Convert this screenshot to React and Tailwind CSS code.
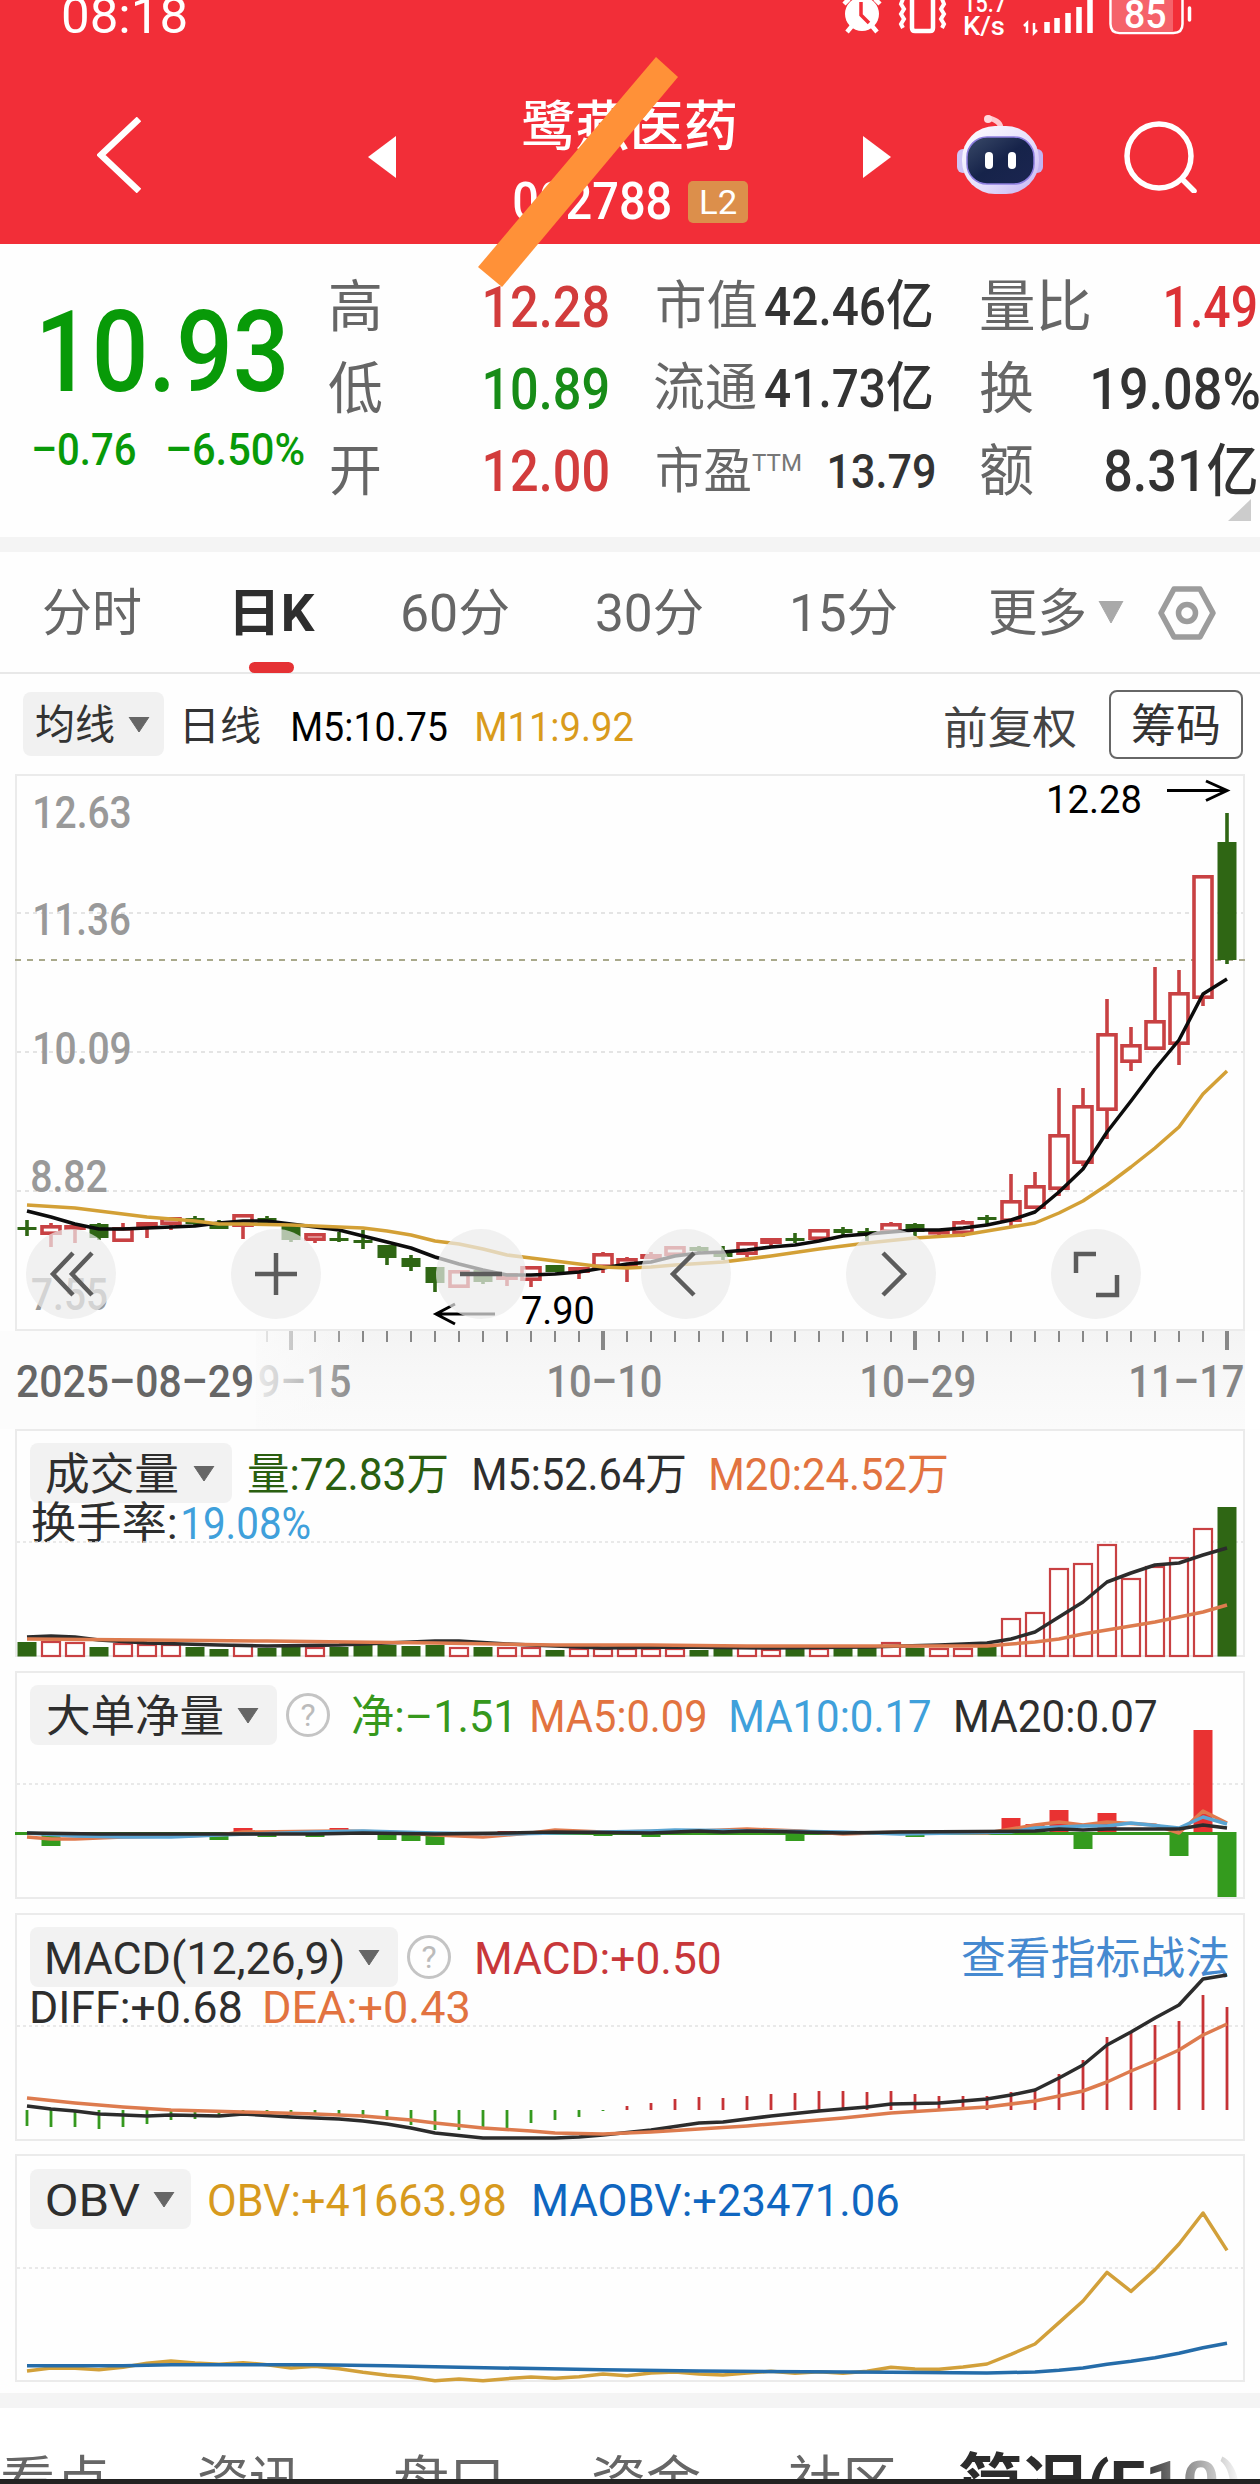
import { useLayoutEffect, useRef } from 'react';

const measure = document.createElement('canvas').getContext('2d');

function inkOf(el) {
  const cs = getComputedStyle(el);
  measure.font = `${cs.fontWeight} ${cs.fontSize} ${cs.fontFamily}`;
  const m = measure.measureText(el.textContent);
  return { l: m.actualBoundingBoxLeft, w: m.actualBoundingBoxLeft + m.actualBoundingBoxRight };
}

// Condenses its text so that the glyphs fill the width of the box.
function Fit({ className = '', children }) {
  const box = useRef(null);
  const inner = useRef(null);
  useLayoutEffect(() => {
    const ink = inkOf(inner.current);
    const s = box.current.offsetWidth / ink.w;
    inner.current.style.transform = `translateX(${ink.l * s}px) scaleX(${s})`;
  });
  return (
    <span ref={box} className={`block shrink-0 leading-none whitespace-nowrap ${className}`}>
      <span ref={inner} className="inline-block origin-left align-top">{children}</span>
    </span>
  );
}

// Chart label with a fixed ink width, placed at its baseline.
function Label({ x, y, w, className, children }) {
  const ref = useRef(null);
  useLayoutEffect(() => {
    const ink = inkOf(ref.current);
    const s = w / ink.w;
    ref.current.setAttribute('transform', `translate(${x + ink.l * s} ${y}) scale(${s} 1)`);
  });
  return <text ref={ref} className={className}>{children}</text>;
}

const X = (i) => 27 + i * 24;
const RED = '#c84143';
const GREEN = '#2f6614';

// [up, bodyTop, bodyBottom, high, low, volumeTop]
const DAYS = [
  [0, 1227, 1229, 1220, 1236, 1642], [1, 1225, 1235, 1223, 1247, 1641], [1, 1225, 1230, 1223, 1243, 1642],
  [0, 1224, 1238, 1223, 1240, 1647], [1, 1227, 1242, 1223, 1242, 1643], [1, 1222, 1228, 1222, 1238, 1644],
  [1, 1217, 1225, 1217, 1230, 1644], [0, 1218, 1224, 1216, 1227, 1647], [0, 1225, 1229, 1220, 1229, 1649],
  [1, 1214, 1227, 1214, 1239, 1644], [0, 1218, 1224, 1216, 1224, 1648], [0, 1225, 1240, 1225, 1242, 1647],
  [1, 1233, 1241, 1233, 1243, 1647], [0, 1238, 1240, 1232, 1242, 1647], [0, 1240, 1242, 1230, 1249, 1645],
  [0, 1245, 1258, 1245, 1265, 1645], [0, 1258, 1267, 1255, 1271, 1646], [0, 1267, 1283, 1267, 1292, 1645],
  [1, 1270, 1288, 1270, 1288, 1647], [0, 1270, 1282, 1270, 1284, 1647], [1, 1273, 1280, 1273, 1286, 1647],
  [1, 1266, 1281, 1266, 1287, 1647], [0, 1265, 1272, 1265, 1272, 1650], [1, 1267, 1273, 1267, 1279, 1648],
  [1, 1253, 1268, 1252, 1273, 1648], [1, 1258, 1268, 1257, 1282, 1648], [1, 1254, 1259, 1252, 1259, 1648],
  [1, 1246, 1256, 1246, 1256, 1648], [0, 1247, 1251, 1246, 1252, 1650], [0, 1251, 1257, 1246, 1260, 1648],
  [1, 1242, 1255, 1242, 1257, 1647], [1, 1238, 1244, 1238, 1246, 1649], [0, 1238, 1241, 1233, 1243, 1648],
  [1, 1229, 1240, 1229, 1240, 1648], [0, 1229, 1233, 1227, 1236, 1648], [0, 1231, 1234, 1228, 1241, 1648],
  [1, 1223, 1233, 1222, 1233, 1642], [0, 1224, 1232, 1223, 1236, 1648], [1, 1230, 1234, 1230, 1236, 1648],
  [1, 1221, 1234, 1220, 1237, 1648], [0, 1217, 1220, 1215, 1224, 1647], [1, 1200, 1222, 1174, 1226, 1618],
  [1, 1185, 1209, 1172, 1209, 1612], [1, 1134, 1190, 1088, 1196, 1568], [1, 1105, 1164, 1088, 1166, 1563],
  [1, 1033, 1111, 999, 1139, 1544], [1, 1044, 1063, 1027, 1071, 1578], [1, 1020, 1050, 967, 1050, 1566],
  [1, 992, 1045, 970, 1065, 1557], [1, 875, 999, 875, 1006, 1528], [0, 842, 960, 813, 964, 1507],
];

const MA5 = [1211, 1217, 1224, 1229, 1229, 1228, 1227, 1226, 1223, 1221, 1221, 1224, 1227, 1230, 1236, 1242, 1248, 1257, 1264, 1270, 1275, 1275, 1274, 1272, 1268, 1264, 1262, 1256, 1253, 1252, 1250, 1247, 1245, 1241, 1236, 1234, 1232, 1230, 1230, 1228, 1225, 1220, 1212, 1192, 1169, 1132, 1101, 1069, 1040, 994, 979]
  .map((y, i) => `${X(i)},${y}`).join(' ');
const MA11 = '27,1205 75,1208 99,1211 123,1214 147,1217 171,1219 195,1221 219,1224 243,1224 291,1225 315,1226 363,1228 387,1231 411,1235 435,1241 459,1244 483,1249 507,1255 531,1258 579,1264 603,1267 627,1268 651,1267 675,1265 723,1262 771,1256 819,1249 867,1243 915,1238 963,1235 1011,1227 1035,1223 1059,1213 1083,1201 1107,1185 1131,1167 1155,1148 1179,1127 1203,1094 1227,1071';
const V5 = '27,1637 51,1636 75,1637 99,1640 147,1643 219,1645 267,1646 339,1645 387,1643 435,1641 459,1641 507,1644 555,1646 603,1648 675,1647 771,1648 867,1647 939,1645 987,1643 1011,1639 1035,1632 1059,1617 1083,1602 1107,1582 1131,1573 1155,1565 1179,1563 1203,1555 1227,1548';
const V20 = '27,1639 147,1640 267,1641 435,1643 555,1645 651,1645 747,1646 843,1646 987,1646 1011,1644 1035,1642 1059,1639 1083,1634 1107,1630 1131,1626 1155,1622 1179,1617 1203,1612 1227,1605';

const NET = [[1, 1846], [8, 1840], [9, 1828], [10, 1837], [12, 1837], [13, 1828], [15, 1840], [16, 1841], [17, 1845], [20, 1831], [24, 1836], [26, 1837], [32, 1841], [37, 1837], [41, 1818], [42, 1824], [43, 1810], [44, 1849], [45, 1813], [48, 1856], [49, 1730], [50, 1897]];
const N20 = '27,1833 100,1834 243,1834 315,1834 363,1833 435,1834 507,1833 555,1832 651,1833 699,1831 723,1832 747,1831 843,1833 900,1832 1035,1831 1059,1829 1083,1830 1107,1829 1179,1829 1203,1825 1227,1828';
const N5 = '27,1837 51,1839 75,1839 123,1837 219,1835 243,1832 339,1831 387,1832 435,1835 483,1837 531,1833 555,1830 603,1832 699,1831 747,1829 800,1831 843,1834 900,1832 987,1833 1035,1825 1059,1822 1083,1825 1107,1822 1155,1825 1179,1833 1203,1811 1227,1823';
const N10 = '27,1833 75,1836 123,1837 171,1837 219,1835 315,1832 363,1831 435,1833 507,1834 651,1831 675,1830 771,1831 843,1832 900,1834 1011,1832 1035,1828 1083,1826 1107,1826 1131,1823 1179,1828 1203,1817 1227,1824';

const MACD = [2126, 2127, 2127, 2129, 2127, 2124, 2120, 2119, 2115, 2113, 2113, 2112, 2113, 2115, 2118, 2120, 2125, 2130, 2130, 2127, 2128, 2123, 2120, 2117, 2111, 2106, 2103, 2099, 2097, 2098, 2096, 2094, 2093, 2091, 2091, 2092, 2091, 2094, 2096, 2096, 2096, 2092, 2090, 2074, 2060, 2037, 2032, 2025, 2021, 1995, 2007];
const DIFF = '27,2106 51,2109 75,2111 99,2114 147,2116 171,2115 219,2116 243,2114 291,2117 339,2119 363,2121 387,2124 411,2128 435,2133 483,2138 555,2138 579,2137 603,2135 651,2130 699,2123 723,2122 771,2116 819,2111 867,2107 891,2104 939,2103 987,2099 1011,2095 1035,2090 1059,2078 1083,2065 1107,2045 1131,2032 1155,2018 1179,2005 1203,1979 1227,1975';
const DEA = '27,2098 75,2103 123,2107 171,2110 243,2112 315,2114 363,2116 411,2120 435,2123 483,2128 531,2131 555,2133 603,2134 651,2132 699,2129 747,2126 795,2122 843,2118 891,2113 939,2110 987,2107 1035,2101 1083,2091 1107,2082 1131,2071 1155,2061 1179,2050 1203,2035 1227,2024';
const OBV = [693, 684, 685, 689, 682, 670, 663, 669, 673, 668, 674, 684, 679, 686, 697, 706, 712, 722, 717, 722, 716, 711, 715, 710, 702, 707, 699, 696, 702, 705, 699, 694, 700, 695, 700, 694, 682, 687, 688, 681, 672, 643, 612, 548, 483, 397, 454, 389, 312, 219, 331]
  .map((v, i) => `${X(i)},${2140 + v / 3}`).join(' ');
const MAOBV = '27,2365.7 123,2365.7 171,2364.7 315,2364.7 387,2365.7 459,2367.3 603,2369.7 699,2371 891,2372.3 987,2373 1035,2372 1059,2370.3 1083,2368 1107,2364.3 1131,2361.3 1155,2357.7 1179,2353.3 1203,2347.7 1227,2343.3';

function Line({ points, color, width = 3.5 }) {
  return <polyline points={points} fill="none" stroke={color} strokeWidth={width} strokeLinejoin="round" />;
}

function Dots({ y }) {
  return <line x1="17" x2="1243" y1={y} y2={y} stroke="#e2e2e2" strokeWidth="1.5" strokeDasharray="3 3" />;
}

function StatusIcons() {
  return (
    <svg viewBox="840 0 360 37" className="ml-[654px] h-[37px] w-[360px] shrink-0 self-start" fill="none" stroke="#fff">
      <circle cx="862" cy="14" r="17" fill="#fff" stroke="none" />
      <path d="M861 2v13l8 8" stroke="#f22e38" strokeWidth="3.5" />
      <path d="M852 26l-5 6M872 26l5 6M844 4l5-5M880 4l-5-5" strokeWidth="4.500" />
      <path d="M912 0v28q0 3 3 3h15q3 0 3-3V0" strokeWidth="4.500" />
      <path d="M903 -1l-2 5 3 5-3 5 3 5-3 5 2 4M942 -1l2 5-3 5 3 5-3 5 3 5-2 4" strokeWidth="4" />
      <path d="M1027 33v-10l-3 3M1034 23v10l3-3" strokeWidth="2.5" />
      <path d="M1047 33V22M1057 33V18M1068 33V13M1079 33V7M1090 33V0" strokeWidth="5.500" />
      <rect x="1112" y="-6" width="61" height="37" fill="#fff" fillOpacity=".25" stroke="none" />
      <path d="M1110.500 -2V24q0 9 9 9h54q9 0 9-9V-2" strokeWidth="2.500" />
      <path d="M1189.500 8v12" strokeWidth="3.500" strokeLinecap="round" />
    </svg>
  );
}

function Robot() {
  return (
    <svg viewBox="957 114 86 82" className="ml-[66px] mb-[4px] h-[82px] w-[86px] shrink-0">
      <defs>
        <linearGradient id="shell" x1="0" y1="0" x2="1" y2="1">
          <stop offset="0" stopColor="#fff" />
          <stop offset=".6" stopColor="#e4dcfb" />
          <stop offset="1" stopColor="#c3b0f2" />
        </linearGradient>
        <linearGradient id="visor" x1="0" y1="0" x2="1" y2="1">
          <stop offset="0" stopColor="#3a4a68" />
          <stop offset=".5" stopColor="#16234a" />
          <stop offset="1" stopColor="#1b2550" />
        </linearGradient>
      </defs>
      <path d="M1001 129q0-8-12-11" stroke="#ffc9cf" strokeWidth="5" fill="none" strokeLinecap="round" />
      <circle cx="988" cy="119" r="4" fill="#ffd9dd" />
      <rect x="957" y="149" width="12" height="24" rx="6" fill="#cfc4f4" />
      <rect x="1031" y="149" width="12" height="24" rx="6" fill="#c3b4f0" />
      <rect x="962" y="126" width="77" height="68" rx="33" fill="url(#shell)" />
      <rect x="967" y="137" width="67" height="47" rx="20" fill="url(#visor)" stroke="#8f7fe0" strokeWidth="1.500" />
      <rect x="985" y="152" width="8" height="17" rx="4" fill="#fff" />
      <rect x="1008" y="152" width="8" height="17" rx="4" fill="#fff" />
    </svg>
  );
}

function Header() {
  return (
    <header className="relative z-10 h-[244px] bg-[#f22e38] text-white">
      <div className="flex h-[32px] items-center pl-[63px]">
        <Fit className="w-[123px] text-[50px]">08:18</Fit>
        <StatusIcons />
        <div className="-ml-[236px] flex w-[42px] flex-col self-start">
          <Fit className="-mt-[9px] ml-px w-[41px] text-[25px] font-medium">15.7</Fit>
          <Fit className="-mt-[2px] w-[40px] text-[25px] font-medium">K/s</Fit>
        </div>
        <Fit className="ml-[119px] -mt-[3px] w-[41px] text-[38px] font-medium">85</Fit>
      </div>
      <div className="mt-[38px] flex h-[174px] items-center pl-[97px]">
        <svg viewBox="0 0 44 76" className="mb-[4px] h-[76px] w-[44px] shrink-0" fill="none" stroke="#fff" strokeWidth="6.500">
          <path d="M42 2L4 38L42 74" />
        </svg>
        <svg viewBox="0 0 28 42" className="ml-[227px] h-[42px] w-[28px] shrink-0"><path d="M28 0V42L0 21Z" fill="#fff" /></svg>
        <div className="ml-[118px] flex h-full w-[234px] flex-col pt-[31px]">
          <Fit className="ml-[9px] w-[212px] text-[54px] font-medium">鹭燕医药</Fit>
          <div className="mt-[26px] flex h-[42px] items-center">
            <Fit className="w-[156px] text-[52px] font-medium">002788</Fit>
            <div className="ml-[18px] flex h-[42px] w-[60px] shrink-0 items-center rounded-[5px] bg-[#dc8f4b] pl-[13px]">
              <Fit className="w-[35px] text-[34px]">L2</Fit>
            </div>
          </div>
        </div>
        <svg viewBox="0 0 28 42" className="ml-[115px] h-[42px] w-[28px] shrink-0"><path d="M0 0V42L28 21Z" fill="#fff" /></svg>
        <Robot />
        <svg viewBox="0 0 73 72" className="ml-[81px] h-[72px] w-[73px] shrink-0" fill="none" stroke="#fff" strokeWidth="5.500">
          <circle cx="35" cy="35" r="32" />
          <path d="M58 58L70 70" strokeLinecap="round" />
        </svg>
      </div>
      <svg viewBox="478 57 200 230" className="absolute top-[57px] left-[478px] h-[230px] w-[200px]">
        <path d="M656 57L678 77L502 287L478 267Z" fill="#ff9138" />
      </svg>
    </header>
  );
}

function Quote() {
  return (
    <section className="flex h-[293px] bg-[#fefefe] text-[#333]">
      <div className="w-[331px] shrink-0 pt-[52px] text-[#089a08]">
        <Fit className="ml-[43px] w-[241px] text-[113px] font-medium">10.93</Fit>
        <div className="mt-[18px] flex pl-[34px] font-medium">
          <Fit className="w-[101px] text-[45px]">–0.76</Fit>
          <Fit className="ml-[33px] w-[136px] text-[45px]">–6.50%</Fit>
        </div>
      </div>
      <div className="relative pt-[22px] font-medium">
        <div className="flex h-[82px] items-center">
          <Fit className="w-[49px] text-[56px] font-normal text-[#666]">高</Fit>
          <Fit className="ml-[105px] w-[123px] text-[57px] text-[#d23c3c]">12.28</Fit>
          <Fit className="ml-[49px] w-[99px] text-[52px] font-normal text-[#666]">市值</Fit>
          <Fit className="ml-[9px] w-[167px] text-[54px]">42.46亿</Fit>
          <Fit className="ml-[49px] w-[108px] text-[56px] font-normal text-[#666]">量比</Fit>
          <Fit className="ml-[77px] w-[90px] text-[57px] text-[#dc3236]">1.49</Fit>
        </div>
        <div className="flex h-[82px] items-center">
          <Fit className="-ml-[2px] w-[53px] text-[56px] font-normal text-[#666]">低</Fit>
          <Fit className="ml-[103px] w-[123px] text-[57px] text-[#178c17]">10.89</Fit>
          <Fit className="ml-[47px] w-[101px] text-[52px] font-normal text-[#666]">流通</Fit>
          <Fit className="ml-[9px] w-[167px] text-[54px]">41.73亿</Fit>
          <Fit className="ml-[49px] w-[52px] text-[56px] font-normal text-[#666]">换</Fit>
          <Fit className="ml-[60px] w-[166px] text-[57px]">19.08%</Fit>
        </div>
        <div className="flex h-[82px] items-center">
          <Fit className="w-[49px] text-[56px] font-normal text-[#666]">开</Fit>
          <Fit className="ml-[105px] w-[123px] text-[57px] text-[#d23c3c]">12.00</Fit>
          <Fit className="ml-[49px] w-[93px] text-[49px] font-normal text-[#666]">市盈</Fit>
          <Fit className="ml-[2px] mb-[17px] w-[48px] text-[24px] font-normal text-[#777]">TTM</Fit>
          <Fit className="ml-[30px] w-[104px] text-[49px]">13.79</Fit>
          <Fit className="ml-[47px] w-[52px] text-[56px] font-normal text-[#666]">额</Fit>
          <Fit className="ml-[72px] w-[151px] text-[57px]">8.31亿</Fit>
        </div>
        <svg viewBox="0 0 23 22" className="absolute top-[255px] left-[897px] h-[22px] w-[23px]"><path d="M23 0V22H0Z" fill="#ccc" /></svg>
      </div>
    </section>
  );
}

function Tabs() {
  return (
    <nav className="relative flex h-[122px] items-center border-b-2 border-[#e8e8e8] bg-[#fefefe] pt-[3px] pl-[44px] text-[51px] text-[#666]">
      <Fit className="w-[97px]">分时</Fit>
      <Fit className="ml-[94px] w-[80px] font-bold text-[#2e2e2e]">日K</Fit>
      <Fit className="ml-[88px] w-[105px]">60分</Fit>
      <Fit className="ml-[89px] w-[105px]">30分</Fit>
      <Fit className="ml-[91px] w-[103px]">15分</Fit>
      <Fit className="ml-[94px] w-[95px]">更多</Fit>
      <svg viewBox="0 0 26 22" className="mb-[3px] ml-[13px] h-[22px] w-[26px] shrink-0"><path d="M1 0H25L13 22Z" fill="#a9a9a9" stroke="#a9a9a9" strokeLinejoin="round" /></svg>
      <svg viewBox="0 0 58 54" className="mb-[2px] ml-[34px] h-[54px] w-[58px] shrink-0" fill="none" stroke="#9c9c9c" strokeWidth="5.500" strokeLinejoin="round">
        <path d="M16 3H42L55 27L42 51H16L3 27Z" />
        <circle cx="29" cy="27" r="8.500" />
      </svg>
      <div className="absolute -bottom-px left-[249px] h-[11px] w-[45px] rounded-full bg-[#e53134]" />
    </nav>
  );
}

function Caret({ className = '' }) {
  return <svg viewBox="0 0 22 15" className={`h-[15px] w-[22px] shrink-0 ${className}`}><path d="M1 0H21L11 15Z" fill="#666" stroke="#666" strokeLinejoin="round" /></svg>;
}

function AverageRow() {
  return (
    <div className="flex h-[100px] items-center bg-[#fefefe] pl-[23px] text-[#333]">
      <div className="flex h-[64px] w-[141px] shrink-0 items-center rounded-lg bg-[#f1f1f1] pl-[13px]">
        <Fit className="mt-[2px] w-[78px] text-[41px]">均线</Fit>
        <Caret className="ml-[14px]" />
      </div>
      <Fit className="mt-[6px] ml-[22px] w-[74px] text-[40px]">日线</Fit>
      <Fit className="mt-[7px] ml-[33px] w-[154px] text-[41px] text-black">M5:10.75</Fit>
      <Fit className="mt-[7px] ml-[30px] w-[156px] text-[41px] text-[#d99b1c]">M11:9.92</Fit>
      <Fit className="mt-[10px] ml-[312px] w-[131px] text-[44px] text-[#444]">前复权</Fit>
      <div className="ml-[33px] flex h-[69px] w-[134px] shrink-0 items-center rounded-lg border-2 border-[#666] pl-[21px]">
        <Fit className="mt-[4px] w-[87px] text-[45px]">筹码</Fit>
      </div>
    </div>
  );
}

const BUTTONS = [
  'M47 24L27 45L47 66M66 24L46 45L66 66',
  'M45 24V66M24 45H66',
  'M24 45H66',
  'M53 24L32 45L53 66',
  'M37 24L58 45L37 66',
  'M45 25H25V44M45 66H66V46',
];

function Candles() {
  return (
    <section className="relative ml-[15px] h-[557px] w-[1230px] border-2 border-[#ebebeb] bg-[#fefefe]">
      <svg viewBox="17 776 1226 553" className="absolute top-0 left-0 h-[553px] w-[1226px] overflow-visible">
        {[913, 1052, 1191].map((y) => (
          <line key={y} x1="17" x2="1243" y1={y} y2={y} stroke="#dcdcdc" strokeWidth="1.500" strokeDasharray="4 4" />
        ))}
        <g fill="#999">
          <Label x={35} y={828} w={95} className="text-[44px] font-medium">12.63</Label>
          <Label x={35} y={935} w={95} className="text-[44px] font-medium">11.36</Label>
          <Label x={35} y={1064} w={95} className="text-[44px] font-medium">10.09</Label>
          <Label x={32} y={1192} w={75} className="text-[44px] font-medium">8.82</Label>
          <Label x={32} y={1310} w={75} className="text-[44px] font-medium">7.55</Label>
        </g>
        <line x1="15" x2="1245" y1="960" y2="960" stroke="#a9a98b" strokeWidth="2" strokeDasharray="6 6" />
        {DAYS.map(([up, top, bottom, high, low], i) => {
          const x = X(i);
          const c = up ? RED : GREEN;
          return (
            <g key={i} stroke={c} strokeWidth="3.600">
              {high < top && <path d={`M${x} ${high}V${top}`} />}
              {low > bottom && <path d={`M${x} ${bottom}V${low}`} />}
              {up
                ? <rect x={x - 9} y={top + 1.8} width="18" height={Math.max(bottom - top - 3.6, 1)} fill="#fff" />
                : <rect x={x - 9.5} y={top} width="19" height={Math.max(bottom - top, 3)} fill={c} stroke="none" />}
            </g>
          );
        })}
        <Line points={MA5} color="#0c0c0c" />
        <Line points={MA11} color="#d3a036" />
        <g fill="none" stroke="#000" strokeWidth="3">
          <path d="M495 1314H437M455 1304L436 1314L455 1324" />
          <path d="M1167 790.500H1226M1206 781L1227 790.500L1206 800.500" />
        </g>
        <Label x={522} y={1324} w={71} className="text-[39px]">7.90</Label>
        <Label x={1049} y={813} w={91} className="text-[39px]">12.28</Label>
      </svg>
      <div className="absolute top-[453px] left-[9px] flex gap-[115px]">
        {BUTTONS.map((d, i) => (
          <svg key={i} viewBox="0 0 90 90" className="h-[90px] w-[90px] rounded-full bg-[#ebebeb]/70" fill="none" stroke="#5c5c5c" strokeWidth="4.500">
            <path d={d} />
          </svg>
        ))}
      </div>
    </section>
  );
}

function DateAxis() {
  return (
    <section className="h-[98px] bg-white">
      <svg viewBox="0 1331 1260 98" className="h-[98px] w-[1260px]">
        <defs>
          <linearGradient id="axisBg" x1="0" y1="0" x2="0" y2="1">
            <stop offset="0" stopColor="#f4f4f4" />
            <stop offset=".5" stopColor="#f8f8f8" />
            <stop offset="1" stopColor="#fbfbfb" />
          </linearGradient>
          <linearGradient id="axisFade" gradientUnits="userSpaceOnUse" x1="0" y1="0" x2="360" y2="0">
            <stop offset="0" stopColor="#fff" />
            <stop offset=".7" stopColor="#fbfbfb" stopOpacity=".9" />
            <stop offset="1" stopColor="#fafafa" stopOpacity="0" />
          </linearGradient>
        </defs>
        <rect x="0" y="1331" width="1245" height="98" fill="url(#axisBg)" />
        {DAYS.map((_, i) => {
          if (i < 10) return null;
          const big = i === 11 || i === 24 || i === 37 || i === 50;
          return <path key={i} d={`M${X(i)} 1331V${big ? 1350 : 1342}`} stroke="#888" strokeWidth={big ? 4 : 2} />;
        })}
        <g fill="#858585" className="text-[45px] font-medium">
          <Label x={237} y={1397} w={113}>09–15</Label>
          <Label x={549} y={1397} w={112}>10–10</Label>
          <Label x={862} y={1397} w={112}>10–29</Label>
          <Label x={1131} y={1397} w={112}>11–17</Label>
        </g>
        <rect x="0" y="1331" width="360" height="98" fill="url(#axisFade)" />
        <rect x="0" y="1331" width="256" height="98" fill="#fcfcfc" />
        <g fill="#666" className="text-[45px] font-medium">
          <Label x={17} y={1397} w={235}>2025–08–29</Label>
        </g>
      </svg>
    </section>
  );
}

function Help({ className = '' }) {
  return (
    <div className={`flex h-[44px] w-[44px] shrink-0 items-center justify-center rounded-full border-[3px] border-[#c4c4c4] text-[32px] leading-none text-[#bbb] ${className}`}>?</div>
  );
}

function VolumePanel() {
  return (
    <section className="relative ml-[15px] h-[228px] w-[1230px] border-2 border-[#ebebeb] bg-[#fefefe] pt-[12px] pl-[13px] text-[44px] text-[#2e2e2e]">
      <div className="flex h-[60px] items-center">
        <div className="flex h-[60px] w-[202px] shrink-0 items-center rounded-lg bg-[#f2f2f2] pl-[16px]">
          <Fit className="mt-[4px] w-[132px]">成交量</Fit>
          <Caret className="ml-[15px]" />
        </div>
        <Fit className="mt-[3px] ml-[17px] w-[198px] text-[#2a5f10]">量:72.83万</Fit>
        <Fit className="mt-[3px] ml-[27px] w-[211px]">M5:52.64万</Fit>
        <Fit className="mt-[3px] ml-[26px] w-[236px] text-[#e27340]">M20:24.52万</Fit>
      </div>
      <div className="flex h-[40px] items-center pl-[2px]">
        <Fit className="mt-[2px] w-[143px]">换手率:</Fit>
        <Fit className="mt-[2px] ml-[8px] w-[127px] text-[#3fa0db]">19.08%</Fit>
      </div>
      <svg viewBox="17 1431 1226 224" className="absolute top-0 left-0 h-[224px] w-[1226px] overflow-visible">
        <Dots y={1542} />
        {DAYS.map(([up, , , , , top], i) => (up
          ? <rect key={i} x={X(i) - 9} y={top + 1} width="18" height={1655 - top} fill="#fff" stroke={RED} strokeWidth="2.200" />
          : <rect key={i} x={X(i) - 9.5} y={top} width="19" height={1656.500 - top} fill={GREEN} />))}
        <Line points={V5} color="#2c2c2c" />
        <Line points={V20} color="#dd7b4e" />
      </svg>
    </section>
  );
}

function NetPanel() {
  return (
    <section className="relative mt-[14px] ml-[15px] h-[228px] w-[1230px] border-2 border-[#ebebeb] bg-[#fefefe] pt-[12px] pl-[13px] text-[44px] text-[#2e2e2e]">
      <div className="flex h-[60px] items-center">
        <div className="flex h-[60px] w-[247px] shrink-0 items-center rounded-lg bg-[#f2f2f2] pl-[17px]">
          <Fit className="mt-[4px] w-[176px]">大单净量</Fit>
          <Caret className="ml-[14px]" />
        </div>
        <Help className="ml-[9px]" />
        <Fit className="mt-[3px] ml-[23px] w-[156px] text-[#36981c]">净:–1.51</Fit>
        <Fit className="mt-[3px] ml-[23px] w-[173px] text-[#e27340]">MA5:0.09</Fit>
        <Fit className="mt-[3px] ml-[26px] w-[199px] text-[#3fa0db]">MA10:0.17</Fit>
        <Fit className="mt-[3px] ml-[26px] w-[200px]">MA20:0.07</Fit>
      </div>
      <svg viewBox="17 1673 1226 224" className="absolute top-0 left-0 h-[224px] w-[1226px] overflow-visible">
        <Dots y={1784} />
        <path d="M15 1833.500H1236" stroke="#36981f" strokeWidth="3" />
        {NET.map(([i, y]) => (
          <rect key={i} x={X(i) - 9.5} y={Math.min(y, 1832)} width="19" height={Math.abs(y - 1832)} fill={y < 1832 ? '#e93232' : '#349b1e'} />
        ))}
        <Line points={N5} color="#e07a4e" />
        <Line points={N10} color="#5aa5d3" />
        <Line points={N20} color="#2c2c2c" />
      </svg>
    </section>
  );
}

function MacdPanel() {
  return (
    <section className="relative mt-[14px] ml-[15px] h-[228px] w-[1230px] border-2 border-[#ebebeb] bg-[#fefefe] pt-[12px] pl-[13px] text-[44px] text-[#2e2e2e]">
      <div className="flex h-[60px] items-center">
        <div className="flex h-[60px] w-[368px] shrink-0 items-center rounded-lg bg-[#f2f2f2] pl-[17px]">
          <Fit className="mt-[3px] w-[296px]">MACD(12,26,9)</Fit>
          <Caret className="ml-[15px]" />
        </div>
        <Help className="ml-[9px]" />
        <Fit className="mt-[3px] ml-[26px] w-[243px] text-[#c8373a]">MACD:+0.50</Fit>
        <Fit className="mt-[4px] ml-[242px] w-[266px] text-[#4589d0]">查看指标战法</Fit>
      </div>
      <div className="flex h-[40px] items-center pl-[2px]">
        <Fit className="mt-[2px] w-[209px]">DIFF:+0.68</Fit>
        <Fit className="mt-[2px] ml-[24px] w-[203px] text-[#e27340]">DEA:+0.43</Fit>
      </div>
      <svg viewBox="17 1915 1226 224" className="absolute top-0 left-0 h-[224px] w-[1226px] overflow-visible">
        <Dots y={2026} />
        {MACD.map((y, i) => (
          <path key={i} d={`M${X(i)} 2110V${y}`} stroke={y > 2110 ? '#35991f' : '#c63336'} strokeWidth="2.800" />
        ))}
        <Line points={DIFF} color="#2c2c2c" />
        <Line points={DEA} color="#dd7b4e" />
      </svg>
    </section>
  );
}

function ObvPanel() {
  return (
    <section className="relative mt-[13px] ml-[15px] h-[228px] w-[1230px] border-2 border-[#ebebeb] bg-[#fefefe] pt-[13px] pl-[13px] text-[44px] text-[#2e2e2e]">
      <div className="flex h-[60px] items-center">
        <div className="flex h-[60px] w-[161px] shrink-0 items-center rounded-lg bg-[#f2f2f2] pl-[17px]">
          <Fit className="mt-[3px] w-[93px]">OBV</Fit>
          <Caret className="ml-[13px]" />
        </div>
        <Fit className="mt-[3px] ml-[18px] w-[296px] text-[#d79a1e]">OBV:+41663.98</Fit>
        <Fit className="mt-[3px] ml-[29px] w-[364px] text-[#0f66c0]">MAOBV:+23471.06</Fit>
      </div>
      <svg viewBox="17 2156 1226 224" className="absolute top-0 left-0 h-[224px] w-[1226px] overflow-visible">
        <Dots y={2268} />
        <Line points={OBV} color="#d2a03a" />
        <Line points={MAOBV} color="#256ca9" />
      </svg>
    </section>
  );
}

function BottomTabs() {
  return (
    <nav className="relative flex h-[76px] items-start overflow-hidden border-b-[5px] border-[#222] bg-white pt-[48px] pl-[4px] text-[53px] text-[#666]">
      <Fit className="-ml-[3px] w-[107px]">看点</Fit>
      <Fit className="ml-[91px] w-[101px]">资讯</Fit>
      <Fit className="ml-[95px] w-[104px]">盘口</Fit>
      <Fit className="ml-[94px] w-[107px]">资金</Fit>
      <Fit className="ml-[89px] w-[106px]">社区</Fit>
      <Fit className="-mt-[3px] ml-[64px] w-[280px] text-[62px] font-bold text-[#2c2c2c]">简况(F10)</Fit>
      <div className="absolute inset-y-0 right-0 w-[120px] bg-linear-to-l from-white from-15% to-transparent" />
    </nav>
  );
}

export default function App() {
  return (
    <main className="h-[2484px] w-[1260px] overflow-hidden bg-[#fefefe] font-['Roboto','Noto_Sans_CJK_SC',sans-serif]">
      <Header />
      <Quote />
      <div className="h-[15px] bg-[#f4f4f4]" />
      <Tabs />
      <AverageRow />
      <Candles />
      <DateAxis />
      <VolumePanel />
      <NetPanel />
      <MacdPanel />
      <ObvPanel />
      <div className="mt-[11px] h-[15px] bg-[#f4f4f4]" />
      <BottomTabs />
    </main>
  );
}
